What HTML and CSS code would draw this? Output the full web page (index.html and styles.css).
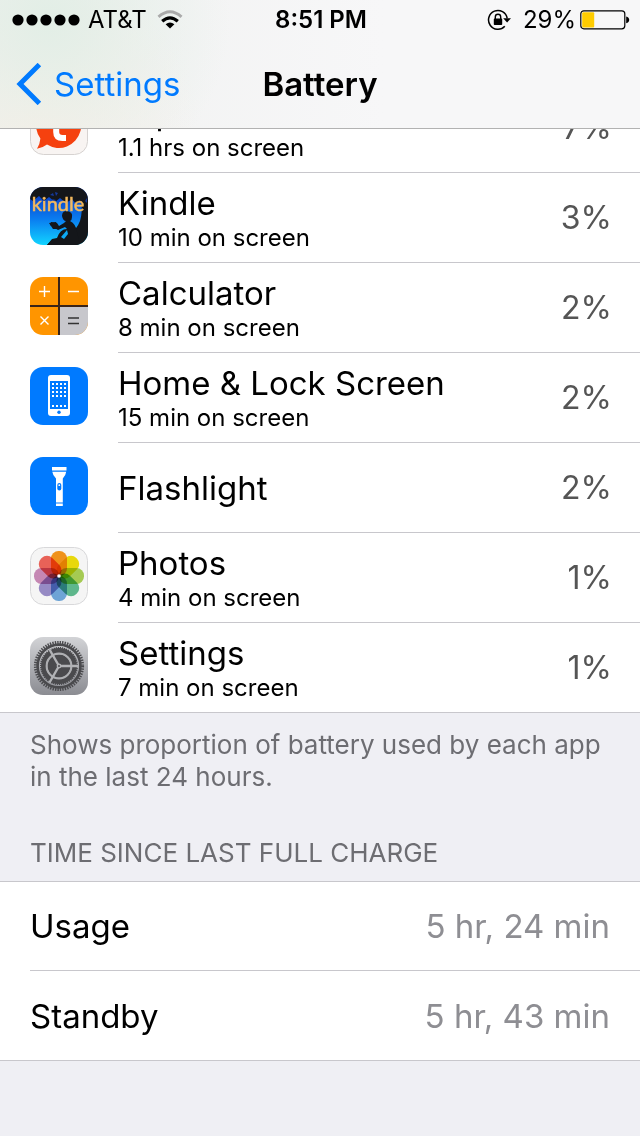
FILE: index.html
```
<!doctype html>
<html lang = "en" >
<head>
<meta charset = "utf-8" >
<meta name = "viewport" content= "width=device-width, initial-scale=1" >
<title>Battery</title>
<link rel="stylesheet" href="styles.css">
</head>
<body>

	<header class="header" >

		<div class="status" >

			<div class="status-left" >
				<svg class="signal" width="68" height="12" viewBox="0 0 68 12" >
					<circle cx="6" cy="6" r="5.6" /><circle cx="20" cy="6" r="5.6" /><circle cx="34" cy="6" r="5.6" />
					<circle cx="48" cy="6" r="5.6" /><circle cx="62" cy="6" r="5.6" />
				</svg>
				<span>AT&amp;T</span>
				<svg class="wifi" width="26" height="20" viewBox="0 0 26 20" >
					<path d="M1.5 6.8 Q13 -3.4 24.5 6.8" fill="none" stroke="#aaa" stroke-width="3" />
					<path d="M5.2 11.2 Q13 4.4 20.8 11.2" fill="none" stroke="#000" stroke-width="3.2" />
					<path d="M8.6 14.2 Q13 10.6 17.4 14.2 L13 18.6 Z" />
				</svg>
			</div>

			<div class="status-time" >8:51 PM</div>

			<div class="status-right" >
				<svg class="lock" width="24" height="22" viewBox="0 0 24 22" >
					<path d="M20.2 9.3 A9.4 9.4 0 1 0 17.8 17.3" fill="none" stroke="#000" stroke-width="1.5" />
					<path d="M16.2 9.2 H24 L20.1 13.4 Z" />
					<rect x="6.8" y="9.6" width="8.4" height="6.4" rx="0.8" />
					<path d="M8.3 10 V8 A2.7 2.7 0 0 1 13.7 8 V10" fill="none" stroke="#000" stroke-width="1.4" />
				</svg>
				<span>29%</span>
				<svg class="battery" width="50" height="20" viewBox="0 0 50 20" >
					<rect x="0.8" y="0.8" width="44" height="18" rx="3" fill="none" stroke="#000" stroke-width="1.2" />
					<rect x="2.2" y="2.2" width="12" height="15.2" rx="1" fill="#fc0" />
					<path d="M46.2 6.4 Q49.2 7 49.2 9.8 Q49.2 12.6 46.2 13.2 Z" />
				</svg>
			</div>

		</div>

		<nav class="nav" >
			<a class="back" href="#" >
				<svg width="26" height="42" viewBox="0 0 26 42" >
					<path d="M23.4 1.6 L4 21 L23.4 40.4" fill="none" stroke="#007aff" stroke-width="5" />
				</svg>
				<span>Settings</span>
			</a>
			<h1>Battery</h1>
		</nav>

	</header>

	<main>

		<ul class="apps" >

			<li class="app" >
				<svg class="icon" viewBox="0 0 58 58" >
					<rect x="0.5" y="0.5" width="57" height="57" rx="13" fill="#f8f4f2" stroke="#d6d2d0" />
					<path d="M29 5 A22.5 23 0 1 1 17 47.6 Q12.5 51 7 51.8 Q10 47 10.4 41.6 A22.5 23 0 0 1 29 5 Z" fill="#f5410f" />
					<path d="M26.2 13 V35 Q26.2 41 32.5 41 H36" fill="none" stroke="#fff" stroke-width="6" />
					<path d="M22 24 H36" stroke="#fff" stroke-width="5" />
				</svg>
				<div class="app-body" >
					<div class="app-text" ><div class="app-name" >Tapatalk</div><div class="app-time" >1.1 hrs on screen</div></div>
					<div class="app-percent" >7%</div>
				</div>
			</li>

			<li class="app" >
				<svg class="icon" viewBox="0 0 58 58" >
					<defs>
						<linearGradient id="sky" x1="0" y1="0" x2="0" y2="1" >
							<stop offset="0.15" stop-color="#0b42c8" /><stop offset="0.55" stop-color="#0a7cf0" /><stop offset="1" stop-color="#12d4ff" />
						</linearGradient>
						<clipPath id="tile" ><rect width="58" height="58" rx="13" /></clipPath>
					</defs>
					<g clip-path="url(#tile)" >
						<rect width="58" height="58" fill="url(#sky)" />
						<path d="M0 0 H58 V58 H17 Q20 54 26 52 Q44 49 50 34 Q53 23 51 14 L46 17 L42 12 L36 16 L30 11 L25 15 L19 10 L14 14 L9 9 L3 14 L0 12 Z" fill="#14161a" />
						<path d="M20 8 l3 -2 l1 3 Z M25 5 l3 1 l-2 3 Z M22 12 l4 1 l-2 2 Z M55 14 l2 -3 v5 Z" fill="#163a9c" />
						<path d="M32 29 Q32 24 37 24 Q43 25 42 30 Q42 33 40 34 Q46 37 47 45 L50 58 H17 L22 52 L27 51 Q30 42 37 42 L35 40 L28 43 L20 38 L21 35 L27 36 L29 39 L34 36 L36 34 Q33 34 32 29 Z" fill="#14161a" />
						<path d="M19 36 L26 35 L29 42 L23 42 Z" fill="#14161a" />
						<path d="M31 50 L37 43 L38 47 L34 52 Z" fill="#0da9f5" />
						<text class="kindle" x="28" y="24" text-anchor="middle" >kindle</text>
					</g>
				</svg>
				<div class="app-body" >
					<div class="app-text" ><div class="app-name" >Kindle</div><div class="app-time" >10 min on screen</div></div>
					<div class="app-percent" >3%</div>
				</div>
			</li>

			<li class="app" >
				<svg class="icon" viewBox="0 0 58 58" >
					<g clip-path="url(#tile)" >
						<rect width="58" height="58" fill="#ff9500" />
						<rect x="29" y="29" width="29" height="29" fill="#c7c7cc" />
						<path d="M29 0 V58 M0 29 H58" stroke="#3a2418" stroke-width="2" />
						<path d="M9 14.5 H20 M14.5 9 V20 M38 14.5 H49 M10.5 39.5 L18.5 47.5 M18.5 39.5 L10.5 47.5" stroke="#fff" stroke-width="1.4" />
						<path d="M38 41 H49 M38 46.5 H49" stroke="#333" stroke-width="1.3" />
					</g>
				</svg>
				<div class="app-body" >
					<div class="app-text" ><div class="app-name" >Calculator</div><div class="app-time" >8 min on screen</div></div>
					<div class="app-percent" >2%</div>
				</div>
			</li>

			<li class="app" >
				<svg class="icon" viewBox="0 0 58 58" >
					<rect width="58" height="58" rx="13" fill="#007aff" />
					<rect x="18" y="8" width="22" height="41" rx="3" fill="#fff" />
					<rect x="20" y="14" width="18" height="28" fill="#007aff" />
					<path d="M22 17 H37 M22 21 H37 M22 25 H37 M22 29 H37 M22 39 H37" stroke="#fff" stroke-width="2" stroke-dasharray="2 2" />
					<circle cx="29" cy="45.3" r="1.7" fill="#007aff" />
				</svg>
				<div class="app-body" >
					<div class="app-text" ><div class="app-name" >Home &amp; Lock Screen</div><div class="app-time" >15 min on screen</div></div>
					<div class="app-percent" >2%</div>
				</div>
			</li>

			<li class="app" >
				<svg class="icon" viewBox="0 0 58 58" >
					<rect width="58" height="58" rx="13" fill="#007aff" />
					<path d="M22 10 H36.5 V13.6 H22 Z M22.3 14.8 H36.2 Q35.8 18.5 32.8 21.6 V45.5 H26 V21.6 Q22.8 18.5 22.3 14.8 Z M26 46.5 H32.8 V49 H26 Z" fill="#fff" />
					<rect x="27.3" y="26" width="4" height="7.4" rx="2" fill="#007aff" />
					<circle cx="29.3" cy="28.2" r="0.9" fill="#fff" />
				</svg>
				<div class="app-body" >
					<div class="app-text" ><div class="app-name" >Flashlight</div></div>
					<div class="app-percent" >2%</div>
				</div>
			</li>

			<li class="app" >
				<svg class="icon" viewBox="0 0 58 58" >
					<rect x="0.5" y="0.5" width="57" height="57" rx="13" fill="#f5f5f5" stroke="#d8d8da" />
					<g class="petals" >
						<rect x="21" y="4" width="16" height="25" rx="7.5" fill="#f9981c" />
						<rect x="21" y="4" width="16" height="25" rx="7.5" fill="#f2e10c" transform="rotate( 45 29 29 )" />
						<rect x="21" y="4" width="16" height="25" rx="7.5" fill="#acd356" transform="rotate( 90 29 29 )" />
						<rect x="21" y="4" width="16" height="25" rx="7.5" fill="#62bf92" transform="rotate( 135 29 29 )" />
						<rect x="21" y="4" width="16" height="25" rx="7.5" fill="#72abdf" transform="rotate( 180 29 29 )" />
						<rect x="21" y="4" width="16" height="25" rx="7.5" fill="#9c90cc" transform="rotate( 225 29 29 )" />
						<rect x="21" y="4" width="16" height="25" rx="7.5" fill="#cd8dba" transform="rotate( 270 29 29 )" />
						<rect x="21" y="4" width="16" height="25" rx="7.5" fill="#f2665b" transform="rotate( 315 29 29 )" />
					</g>
					<circle cx="29" cy="29" r="1.8" fill="#fff" />
				</svg>
				<div class="app-body" >
					<div class="app-text" ><div class="app-name" >Photos</div><div class="app-time" >4 min on screen</div></div>
					<div class="app-percent" >1%</div>
				</div>
			</li>

			<li class="app" >
				<svg class="icon" viewBox="0 0 58 58" >
					<defs>
						<linearGradient id="metal" x1="0" y1="0" x2="0" y2="1" >
							<stop offset="0" stop-color="#d2d3d6" /><stop offset="1" stop-color="#8b8c92" />
						</linearGradient>
					</defs>
					<rect width="58" height="58" rx="13" fill="url(#metal)" />
					<g fill="none" stroke="#4a4a4d" >
						<circle cx="29" cy="29" r="23.6" stroke-width="3" stroke-dasharray="1.4 1.07" />
						<circle cx="29" cy="29" r="21.4" stroke-width="2.6" />
						<circle cx="29" cy="29" r="15.5" stroke-width="5" />
						<circle cx="29" cy="29" r="18.2" stroke-width="1.6" stroke-dasharray="1.2 0.9" />
					</g>
					<circle cx="29" cy="29" r="11.6" fill="#4a4a4d" />
					<circle cx="29" cy="29" r="12.4" fill="none" stroke="#aeafb2" stroke-width="2" />
					<path d="M29 29 H48 M29 29 L19.5 12.5 M29 29 L19.5 45.5" stroke="#b2b3b6" stroke-width="2.4" />
					<circle cx="29" cy="29" r="2.4" fill="#b2b3b6" />
					<circle cx="29" cy="29" r="1" fill="#4a4a4d" />
				</svg>
				<div class="app-body" >
					<div class="app-text" ><div class="app-name" >Settings</div><div class="app-time" >7 min on screen</div></div>
					<div class="app-percent" >1%</div>
				</div>
			</li>

		</ul>

		<p class="note" >Shows proportion of battery used by each app in the last 24 hours.</p>

		<h2>TIME SINCE LAST FULL CHARGE</h2>

		<dl class="times" >
			<div class="time" ><dt>Usage</dt><dd>5 hr, 24 min</dd></div>
			<div class="time" ><dt>Standby</dt><dd>5 hr, 43 min</dd></div>
		</dl>

	</main>

</body>
</html>
```

FILE: styles.css
```
* { box-sizing: border-box; }

:root { --line: #c8c7cc; --blue: #007aff; --row: 90px; }

body { background: #efeff4; color: #000; font: 33px/40px Inter, "Liberation Sans", sans-serif; margin: 0; }

h1, h2, p, ul, dl, dd { font-size: inherit; margin: 0; padding: 0; }

svg { display: block; flex: none; }


.header { border-bottom: 1px solid #b2b2b2;
	background: radial-gradient( circle at 50px 20px, #e2eee6, transparent 180px ), radial-gradient( circle at 40px 128px, #faf0e9, transparent 160px ), linear-gradient( to right, #f0f1f0, #f7f7f8 60% ); }

.status { align-items: center; display: grid; font-size: 24px; grid-template-columns: 1fr auto 1fr; height: 40px; padding: 0 10px 0 12px; }
.status-left { align-items: center; display: flex; gap: 8px; }
.status-time { font-weight: 600; }
.status-right { align-items: center; display: flex; justify-content: flex-end; gap: 4px; }
.wifi { margin-left: 2px; }
.lock { margin-right: 8px; }

.nav { align-items: center; display: grid; grid-template-columns: 1fr auto 1fr; height: 88px; padding: 0 16px; }
.nav h1 { font-weight: 600; }
.back { align-items: center; color: var(--blue); display: flex; gap: 12px; text-decoration: none; }


.apps { background: #fff; border-bottom: 1px solid var(--line); list-style: none; overflow: hidden; }

/* the list is scrolled, its first row is half under the header */
.app { display: flex; gap: 30px; height: var(--row); padding-left: 30px; }
.app:first-child { margin-top: -46px; }
.app:last-child { height: 89px; }
.app:last-child .app-body { border: 0; }

.icon { height: 58px; margin-top: 14px; width: 58px; }
.petals rect { mix-blend-mode: multiply; }
.kindle { fill: #f3b95f; font: 20px Lato, sans-serif; stroke: #f3b95f; stroke-width: 0.5; }

.app-body { align-items: center; border-bottom: 1px solid var(--line); display: flex; flex: 1; justify-content: space-between; padding-right: 28px; }
.app-time { font-size: 24px; line-height: 30px; }
.app-percent { color: #555; font-size: 32px; }


.note { color: #6d6d72; font-size: 26px; line-height: 32px; padding: 16px 30px 0; }

h2 { color: #6d6d72; font-size: 26px; font-weight: 400; line-height: 32px; padding: 44px 30px 12px; }

.times { background: #fff; border-bottom: 1px solid var(--line); border-top: 1px solid var(--line); padding-left: 30px; }
.time { align-items: center; border-bottom: 1px solid var(--line); display: flex; height: 89px; justify-content: space-between; padding-right: 30px; }
.time:last-child { border: 0; }
.time dd { color: #8e8e93; }
```
